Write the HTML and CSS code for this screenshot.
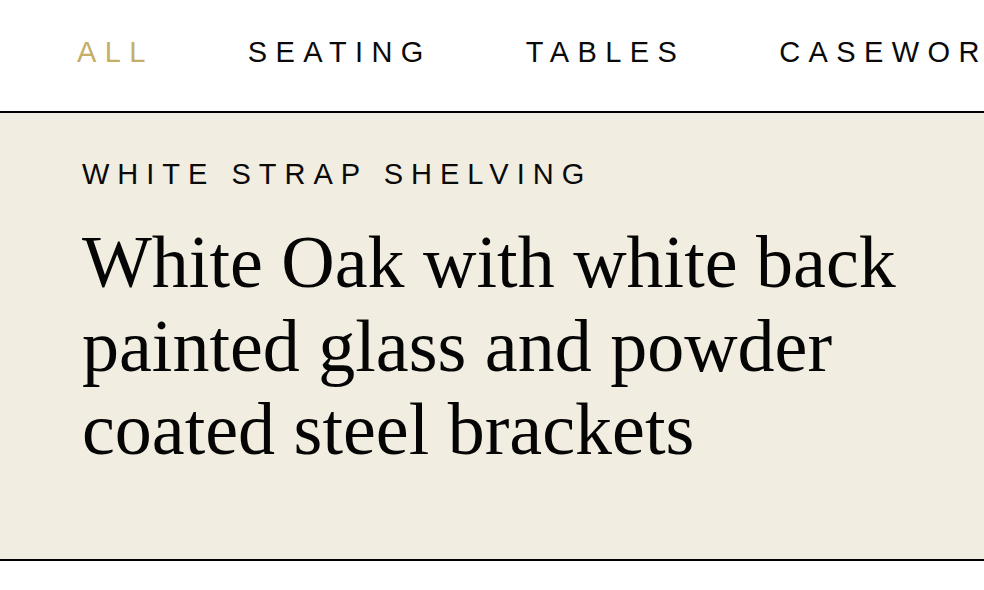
FILE: index.html
```html
<!DOCTYPE html>
<html lang="en">
<head>
<meta charset="utf-8">
<title>White Strap Shelving</title>
<link rel="stylesheet" href="styles.css">
</head>
<body>
<nav class="filters">
  <a class="filter filter--active" href="#">ALL</a>
  <a class="filter" href="#">SEATING</a>
  <a class="filter" href="#">TABLES</a>
  <a class="filter" href="#">CASEWORK</a>
</nav>
<section class="feature">
  <p class="feature__eyebrow">WHITE STRAP SHELVING</p>
  <h1 class="feature__title">White Oak with white back painted glass and powder coated steel brackets</h1>
</section>
</body>
</html>
```
FILE: styles.css
```css
html, body {
  margin: 0;
  padding: 0;
  background: #ffffff;
}

body {
  width: 984px;
  height: 590px;
  overflow: hidden;
}

.filters {
  display: flex;
  gap: 94px;
  padding: 36px 0 43px 77px;
  border-bottom: 2px solid #000;
  white-space: nowrap;
  overflow: hidden;
}

.filter {
  flex: none;
  font-family: "Liberation Sans", Arial, sans-serif;
  font-size: 29px;
  line-height: 32px;
  letter-spacing: 8.4px;
  color: #0a0a0a;
  text-decoration: none;
}

.filter--active {
  color: #c5ae68;
}

.feature {
  background: #f1ede0;
  border-bottom: 2px solid #000;
  padding: 45px 60px 87px 82px;
}

.feature__eyebrow {
  margin: 0;
  font-family: "Liberation Sans", Arial, sans-serif;
  font-size: 29px;
  line-height: 32px;
  letter-spacing: 8px;
  color: #0a0a0a;
}

.feature__title {
  margin: 31px 0 0;
  font-family: "Liberation Serif", "Times New Roman", serif;
  font-weight: 400;
  font-size: 74px;
  line-height: 83.5px;
  color: #050505;
}
```
